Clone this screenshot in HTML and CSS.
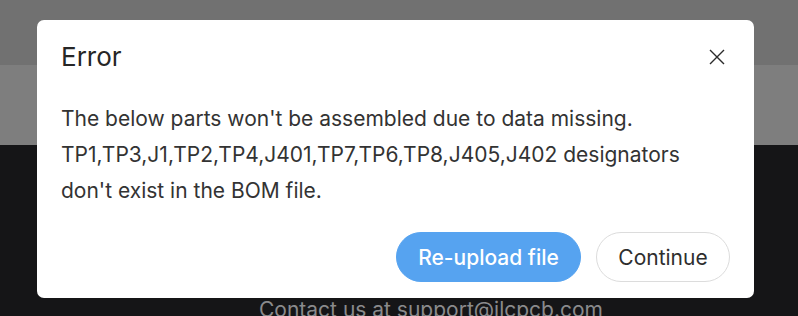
FILE: index.html
```html
<!DOCTYPE html>
<html lang="en">
<head>
<meta charset="utf-8">
<title>Error</title>
<link rel="stylesheet" href="styles.css">
</head>
<body>
<div class="page">
  <div class="band-top"></div>
  <div class="band-mid"></div>
  <div class="footer">
    <p class="contact">Contact us at support@jlcpcb.com</p>
  </div>
</div>
<div class="modal" role="dialog" aria-labelledby="modal-title">
  <div class="modal-header">
    <h2 id="modal-title" class="modal-title">Error</h2>
    <button class="close" aria-label="Close">
      <svg width="16" height="16" viewBox="0 0 16 16" aria-hidden="true">
        <path d="M1.5 1.5 L14.5 14.5 M14.5 1.5 L1.5 14.5" stroke="#2b2b2b" stroke-width="1.4" fill="none" stroke-linecap="square"/>
      </svg>
    </button>
  </div>
  <div class="modal-body">
    <p>The below parts won't be assembled due to data missing.<br>TP1,TP3,J1,TP2,TP4,J401,TP7,TP6,TP8,J405,J402 designators don't exist in the BOM file.</p>
  </div>
  <div class="modal-footer">
    <button class="btn btn-primary">Re-upload file</button>
    <button class="btn btn-default">Continue</button>
  </div>
</div>
</body>
</html>
```
FILE: styles.css
```css
* { box-sizing: border-box; }
html, body {
  margin: 0;
  padding: 0;
  width: 798px;
  height: 316px;
  overflow: hidden;
  font-family: Inter, "Noto Sans", sans-serif;
}
.page {
  display: flex;
  flex-direction: column;
  height: 316px;
  background: #151517;
}
.band-top {
  height: 65px;
  background: #717171;
}
.band-mid {
  height: 80px;
  background: #7e7e7e;
}
.footer {
  flex: 1;
  display: flex;
  flex-direction: column;
  justify-content: flex-end;
  padding-left: 259px;
}
.contact {
  margin: 0 0 -8px 0;
  font-size: 21px;
  line-height: 28px;
  color: #8a8a8c;
}
.modal {
  position: absolute;
  left: 37px;
  top: 20px;
  width: 717px;
  height: 278px;
  background: #ffffff;
  border-radius: 7px;
  display: flex;
  flex-direction: column;
  padding: 0 24px;
}
.modal-header {
  display: flex;
  align-items: center;
  justify-content: space-between;
  padding-top: 20px;
}
.modal-title {
  margin: 0;
  font-size: 26px;
  font-weight: 400;
  line-height: 34px;
  color: #262626;
}
.close {
  border: 0;
  background: none;
  padding: 0;
  margin-right: 5px;
  width: 16px;
  height: 16px;
  display: flex;
  align-items: center;
  justify-content: center;
}
.modal-body {
  padding-top: 27px;
}
.modal-body p {
  margin: 0;
  font-size: 21px;
  line-height: 36px;
  color: #333333;
}
.modal-footer {
  margin-top: auto;
  margin-bottom: 16px;
  display: flex;
  justify-content: flex-end;
  gap: 15px;
}
.btn {
  height: 50px;
  border-radius: 25px;
  font-family: Inter, "Noto Sans", sans-serif;
  font-size: 21px;
  padding: 0;
  cursor: pointer;
}
.btn-primary {
  width: 185px;
  background: #56a3f0;
  border: 1px solid #56a3f0;
  color: #ffffff;
  font-weight: 500;
}
.btn-default {
  width: 134px;
  background: #ffffff;
  border: 1px solid #dcdcdc;
  color: #2e2e2e;
  font-weight: 400;
}
```
